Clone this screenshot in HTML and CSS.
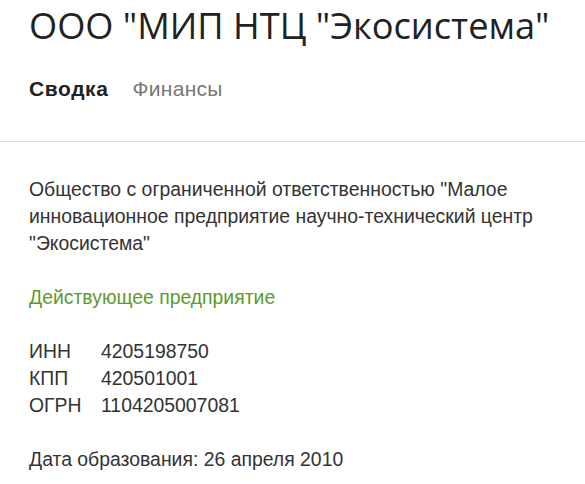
FILE: index.html
```html
<html>
<head>
<meta charset="utf-8">
<link rel="stylesheet" href="styles.css">
</head>
<body>
<div class="header">
<h1 class="title">ООО "МИП НТЦ "Экосистема"</h1>
<div class="tabs">
<span class="tab active">Сводка</span>
<span class="tab">Финансы</span>
</div>
</div>
<div class="content">
<p class="fullname">Общество с ограниченной ответственностью "Малое инновационное предприятие научно-технический центр "Экосистема"</p>
<p class="status">Действующее предприятие</p>
<div class="codes">
<span class="label">ИНН</span><span>4205198750</span>
<span class="label">КПП</span><span>420501001</span>
<span class="label">ОГРН</span><span>1104205007081</span>
</div>
<p class="date">Дата образования: 26 апреля 2010</p>
</div>
</body>
</html>
```

FILE: styles.css
```css
* {
    margin:0px;
    padding:0px;
}
html, body {
    background:#ffffff;
    color:#333333;
    font-family:"Liberation Sans", Arial, sans-serif;
    font-size:19.4px;
    line-height:27px;
}
.header {
    padding:0 28px 39px 29px;
    border-bottom:1px solid #dddddd;
}
.title {
    font-family:"Open Sans", sans-serif;
    font-weight:normal;
    font-size:36.2px;
    line-height:50px;
    color:#222222;
    white-space:nowrap;
}
.tabs {
    display:flex;
    gap:24px;
    margin-top:25px;
    font-size:21px;
}
.tab {
    color:#777777;
    letter-spacing:0.3px;
}
.tab.active {
    color:#222222;
    font-weight:bold;
    letter-spacing:0.6px;
}
.content {
    padding:34px 28px 0 29px;
}
.content p {
    margin-bottom:27px;
}
.status {
    color:#5b9b2b;
}
.codes {
    display:grid;
    grid-template-columns:72px auto;
    margin-bottom:27px;
}
```
